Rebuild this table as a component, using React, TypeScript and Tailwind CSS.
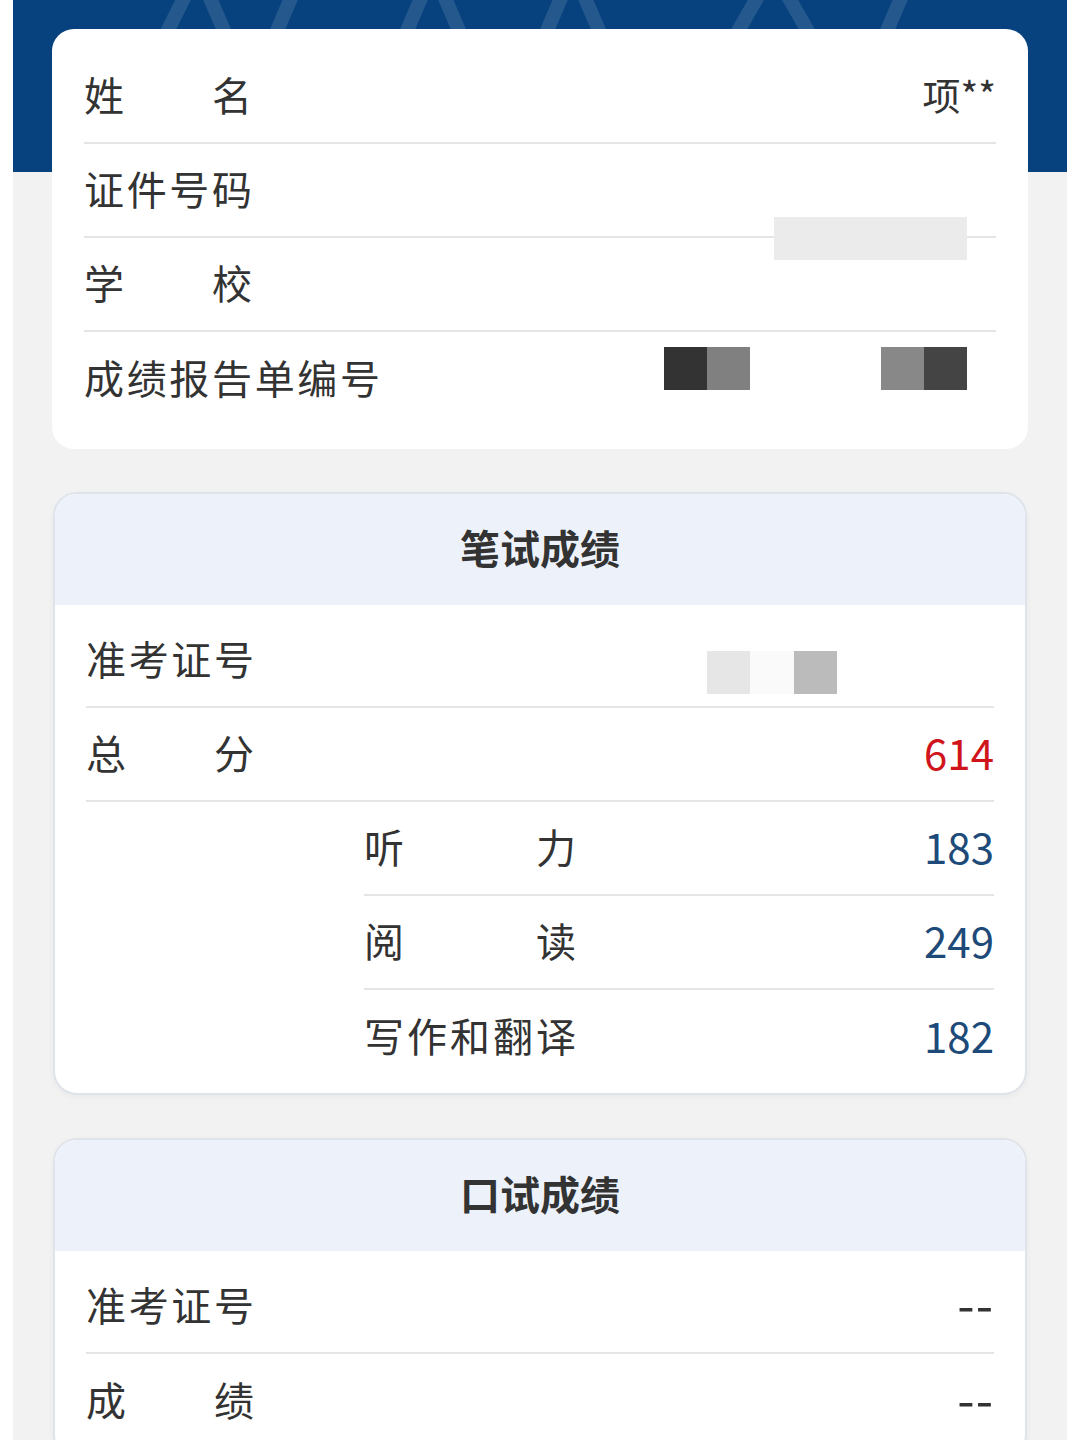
import React from "react";

const font = { fontFamily: '"Noto Sans CJK SC", "Noto Sans", sans-serif' };

function Label({ text, width = "w-[168px]" }: { text: string; width?: string }) {
  return (
    <div className={`${width} flex justify-between text-[40px] leading-none text-[#333] pb-[5px]`}>
      {text.split("").map((c, i) => (
        <span key={i}>{c}</span>
      ))}
    </div>
  );
}

function Row({
  label,
  children,
  divider = true,
  labelWidth,
}: {
  label: string;
  children?: React.ReactNode;
  divider?: boolean;
  labelWidth?: string;
}) {
  return (
    <div className={`h-[94px] flex items-center justify-between ${divider ? "border-b-2 border-[#e5e5e5]" : ""}`}>
      <Label text={label} width={labelWidth} />
      <div className="flex items-center">{children}</div>
    </div>
  );
}

function Value({ children, color = "text-[#1d4a78]" }: { children: React.ReactNode; color?: string }) {
  return <span className={`text-[42px] leading-none pb-[5px] ${color}`}>{children}</span>;
}

function Mosaic({ colors }: { colors: string[] }) {
  return (
    <div className="flex">
      {colors.map((c, i) => (
        <div key={i} className={`w-[43px] h-[43px] ${c}`} />
      ))}
    </div>
  );
}

export default function App() {
  return (
    <div style={font} className="w-[1080px] min-h-[1440px] bg-white px-[13px]">
      <div className="bg-[#f2f2f3] min-h-[1440px] overflow-hidden">
        {/* 顶部蓝色背景 */}
        <div className="h-[172px] bg-[#07427f]">
          <svg width="1054" height="172" viewBox="0 0 1054 172">
            <g stroke="rgba(255,255,255,0.12)" strokeWidth="14" fill="none">
              <path d="M150 40 L185 -30 L215 40" />
              <path d="M260 40 L290 -30" />
              <path d="M390 40 L420 -30 L450 40" />
              <path d="M530 40 L560 -30 L590 40" />
              <path d="M720 40 L760 -30 L800 40" />
              <path d="M870 40 L900 -30" />
            </g>
          </svg>
        </div>

        {/* 个人信息 */}
        <div className="mt-[-143px] mx-[39px] bg-white rounded-[22px] px-[32px] pt-[21px] pb-[23px] relative">
          <Row label="姓名">
            <span className="text-[38px] leading-none text-[#333] pb-[5px]">项**</span>
          </Row>
          <Row label="证件号码">
            <div className="w-[193px] h-[43px] bg-[#ebebeb] mt-[96px] mr-[29px]" />
          </Row>
          <Row label="学校" />
          <Row label="成绩报告单编号" labelWidth="w-[296px]" divider={false}>
            <div className="flex gap-[131px] mr-[29px] mb-[22px]">
              <Mosaic colors={["bg-[#333333]", "bg-[#808080]"]} />
              <Mosaic colors={["bg-[#888888]", "bg-[#444444]"]} />
            </div>
          </Row>
        </div>

        {/* 笔试成绩 */}
        <div className="mt-[43px] mx-[40px] bg-white rounded-[24px] border-2 border-[#dfe3ea] overflow-hidden shadow-[0_2px_6px_rgba(0,0,0,0.04)]">
          <div className="h-[111px] bg-[#edf2fa] flex items-center justify-center">
            <span className="text-[40px] font-bold text-[#333] leading-none pb-[6px]">笔试成绩</span>
          </div>
          <div className="px-[31px] pt-[9px] pb-[9px]">
            <Row label="准考证号">
              <div className="flex mr-[157px] mt-[24px]">
                <div className="w-[43px] h-[43px] bg-[#e6e6e6]" />
                <div className="w-[44px] h-[43px] bg-[#fafafa]" />
                <div className="w-[43px] h-[43px] bg-[#bbbbbb]" />
              </div>
            </Row>
            <Row label="总分">
              <Value color="text-[#d0141c]">614</Value>
            </Row>
            <div className="pl-[278px]">
              <Row label="听力" labelWidth="w-[212px]">
                <Value>183</Value>
              </Row>
              <Row label="阅读" labelWidth="w-[212px]">
                <Value>249</Value>
              </Row>
              <Row label="写作和翻译" labelWidth="w-[212px]" divider={false}>
                <Value>182</Value>
              </Row>
            </div>
          </div>
        </div>

        {/* 口试成绩 */}
        <div className="mt-[43px] mx-[40px] bg-white rounded-[24px] border-2 border-[#dfe3ea] overflow-hidden shadow-[0_2px_6px_rgba(0,0,0,0.04)]">
          <div className="h-[111px] bg-[#edf2fa] flex items-center justify-center">
            <span className="text-[40px] font-bold text-[#333] leading-none pb-[6px]">口试成绩</span>
          </div>
          <div className="px-[31px] pt-[9px] pb-[9px]">
            <Row label="准考证号">
              <span className="text-[50px] leading-none text-[#333] tracking-[1px] pb-[8px]">--</span>
            </Row>
            <Row label="成绩" divider={false}>
              <span className="text-[50px] leading-none text-[#333] tracking-[1px] pb-[8px]">--</span>
            </Row>
          </div>
        </div>
      </div>
    </div>
  );
}
